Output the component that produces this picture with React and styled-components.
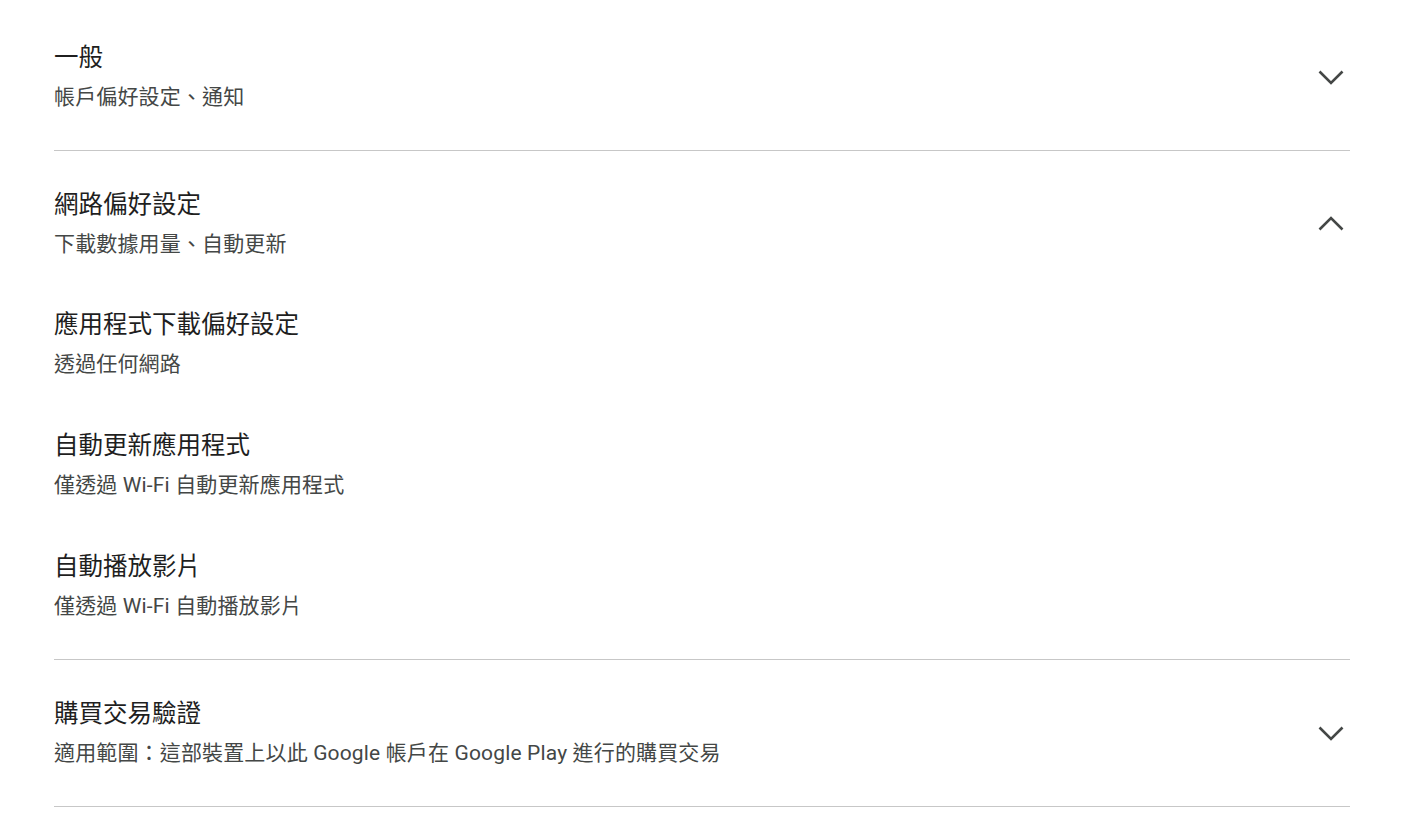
import React, { useState } from 'react'
import styled, { createGlobalStyle } from 'styled-components'

const GlobalStyle = createGlobalStyle`
	body {
		margin: 0;
		background: #ffffff;
		font-family: Roboto, 'Noto Sans CJK TC', sans-serif;
	}
`

const Page = styled.main`
	padding: 4px 77px 0 54px;
`

const Section = styled.section`
	border-bottom: 1px solid #c7c7c7;
	padding: 36px 0 38px;
`

const Header = styled.button`
	all: unset;
	box-sizing: border-box;
	width: 100%;
	display: flex;
	align-items: center;
	justify-content: space-between;
	cursor: pointer;
`

const Item = styled.div`
	display: flex;
	flex-direction: column;
`

const Title = styled.div`
	font-size: 24.5px;
	line-height: 36px;
	color: #1f1f1f;
`

const Subtitle = styled.div`
	font-size: 21px;
	line-height: 30px;
	margin-top: 6px;
	color: #444746;
	letter-spacing: 0.15px;
`

const Body = styled.div`
	display: flex;
	flex-direction: column;
	gap: 49px;
	margin-top: 48px;
`

const Chevron = styled.svg`
	width: 36px;
	height: 36px;
	flex-shrink: 0;
	margin: 2px 1px 0 0;
	transform: ${(p) => (p.$open ? 'rotate(180deg)' : 'none')};
`

const sections = [
	{
		title: '一般',
		subtitle: '帳戶偏好設定、通知',
		items: [],
	},
	{
		title: '網路偏好設定',
		subtitle: '下載數據用量、自動更新',
		open: true,
		items: [
			{ title: '應用程式下載偏好設定', subtitle: '透過任何網路' },
			{ title: '自動更新應用程式', subtitle: '僅透過 Wi-Fi 自動更新應用程式' },
			{ title: '自動播放影片', subtitle: '僅透過 Wi-Fi 自動播放影片' },
		],
	},
	{
		title: '購買交易驗證',
		subtitle: '適用範圍：這部裝置上以此 Google 帳戶在 Google Play 進行的購買交易',
		items: [],
	},
]

const SettingsSection = ({ title, subtitle, items, open: initiallyOpen }) => {
	const [open, setOpen] = useState(!!initiallyOpen)

	return (
		<Section>
			<Header onClick={() => setOpen(!open)}>
				<Item>
					<Title>{title}</Title>
					<Subtitle>{subtitle}</Subtitle>
				</Item>
				<Chevron $open={open} viewBox="0 0 36 36">
					<polyline
						points="6.5,12.5 18,24 29.5,12.5"
						fill="none"
						stroke="#444746"
						strokeWidth="2.6"
					/>
				</Chevron>
			</Header>

			{open && items.length > 0 && (
				<Body>
					{items.map((item) => (
						<Item key={item.title}>
							<Title>{item.title}</Title>
							<Subtitle>{item.subtitle}</Subtitle>
						</Item>
					))}
				</Body>
			)}
		</Section>
	)
}

const App = () => {
	return (
		<>
			<GlobalStyle />
			<Page>
				{sections.map((s) => (
					<SettingsSection key={s.title} {...s} />
				))}
			</Page>
		</>
	)
}

export default App
